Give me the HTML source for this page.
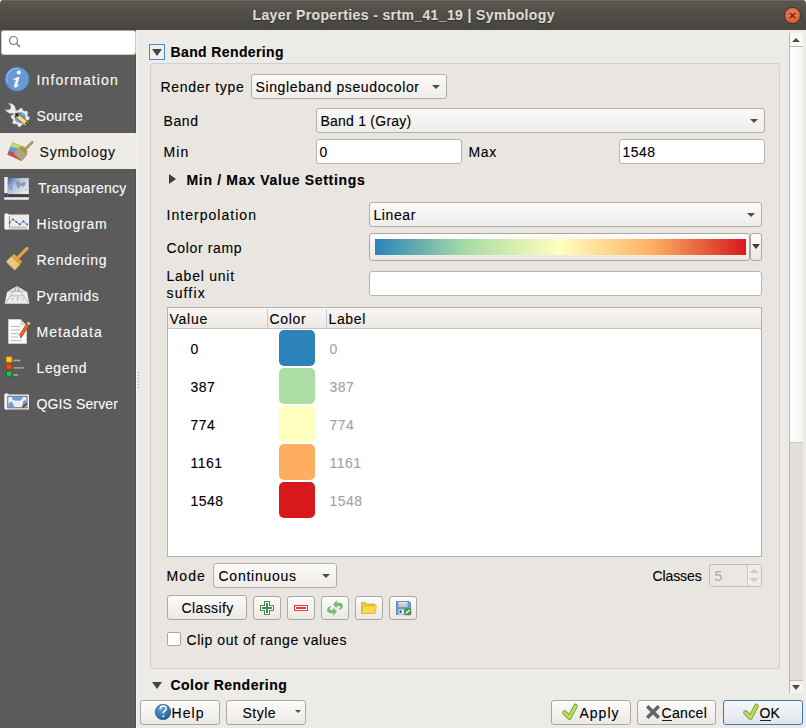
<!DOCTYPE html>
<html><head><meta charset="utf-8">
<style>
*{box-sizing:border-box;margin:0;padding:0}
html,body{width:806px;height:728px;overflow:hidden}
body{position:relative;background:#edebe7;font-family:"Liberation Sans",sans-serif;font-size:14px;color:#000}
.t{-webkit-text-stroke:0.12px currentColor}
.a{position:absolute}
.t{position:absolute;white-space:nowrap;line-height:14px;font-size:14px}
.b{font-weight:700}
#title{left:0;top:0;width:806px;height:30px;background:linear-gradient(#5a5650,#47453f);border-radius:4px 4px 0 0;box-shadow:inset 0 1px 0 #6c685f}
#side{left:0;top:30px;width:136px;height:698px;background:#5b5b5b;border-right:1px solid #525252}
.si{color:#fafafa}
.field{position:absolute;background:#fff;border:1px solid #b9b5ae;border-radius:3px}
.combo{position:absolute;background:linear-gradient(#fbfaf9,#efedea);border:1px solid #b3afa8;border-radius:3px}
.btn{position:absolute;background:linear-gradient(#fdfcfb,#ebe8e4);border:1px solid #aca8a1;border-radius:3px}
.arr{position:absolute;width:0;height:0;border-left:4px solid transparent;border-right:4px solid transparent;border-top:4px solid #4c4c4c}
</style></head><body>
<div id="title" class="a"></div>
<div class="t b" style="left:252.5px;top:8px;color:#dfdbd2;letter-spacing:0.37px;text-shadow:0 1px 1px rgba(0,0,0,.45)">Layer Properties - srtm_41_19 | Symbology</div>
<div class="a" style="left:784px;top:7px;width:17px;height:17px;border-radius:50%;background:radial-gradient(circle at 50% 30%,#f47a55,#e0501f);border:1px solid #3a3431"></div>
<svg class="a" style="left:784px;top:7px" width="17" height="17"><path d="M5.8 5.8L11.2 11.2M11.2 5.8L5.8 11.2" stroke="#2a2018" stroke-width="1.1"/></svg>

<div id="side" class="a"></div>

<div class="a" style="left:1px;top:30px;width:135px;height:25px;background:#fff;border-radius:3px;border:1px solid #cfcbc5;border-top-color:#a9a59f"></div>
<svg class="a" style="left:8px;top:35px" width="14" height="14"><circle cx="5.5" cy="5.5" r="4" fill="none" stroke="#7a7a7a" stroke-width="1.2"/><path d="M8.5 8.5L12 12" stroke="#7a7a7a" stroke-width="1.5"/></svg>
<div class="a" style="left:0;top:133px;width:137px;height:36px;background:#efece8"></div>
<div class="t si" style="left:36.5px;top:73px;letter-spacing:1.12px">Information</div>
<div class="t si" style="left:36.5px;top:109px;letter-spacing:0.37px">Source</div>
<div class="t" style="left:39.5px;top:145px;letter-spacing:0.79px;color:#101010">Symbology</div>
<div class="t si" style="left:38px;top:181px;letter-spacing:0.30px">Transparency</div>
<div class="t si" style="left:36.5px;top:217px;letter-spacing:0.80px">Histogram</div>
<div class="t si" style="left:36.5px;top:253px;letter-spacing:0.69px">Rendering</div>
<div class="t si" style="left:36.5px;top:289px;letter-spacing:0.57px">Pyramids</div>
<div class="t si" style="left:36.5px;top:325px;letter-spacing:0.97px">Metadata</div>
<div class="t si" style="left:36.5px;top:361px;letter-spacing:0.64px">Legend</div>
<div class="t si" style="left:36.5px;top:397px;letter-spacing:0.12px">QGIS Server</div>


<!-- sidebar icons -->
<svg class="a" style="left:0;top:62px" width="36" height="360" viewBox="0 62 36 360">
<defs>
<radialGradient id="gi" cx="40%" cy="30%" r="75%"><stop offset="0" stop-color="#7aa6de"/><stop offset="1" stop-color="#4a7cc0"/></radialGradient>
<linearGradient id="gt" x1="0" y1="0" x2="1" y2="0.7"><stop offset="0" stop-color="#3d67aa"/><stop offset="0.45" stop-color="#b4c4dc"/><stop offset="1" stop-color="#e8ebf0"/></linearGradient>
<pattern id="hatch" width="2" height="2" patternUnits="userSpaceOnUse"><rect width="2" height="2" fill="#c9c29a"/><rect width="1" height="1" fill="#8d8660"/></pattern>
<pattern id="hatch2" width="2" height="2" patternUnits="userSpaceOnUse"><rect width="2" height="2" fill="#f0c27a"/><rect width="1" height="1" fill="#c98a30"/></pattern>
</defs>
<!-- info -->
<circle cx="17.1" cy="79.1" r="12.2" fill="#6899d4" stroke="#4874b0" stroke-width="1"/>
<path d="M7.2 82 A10.2 10.2 0 0 1 20 69" stroke="#8fb5e4" stroke-width="1.2" fill="none"/>
<circle cx="18.8" cy="72.5" r="2.1" fill="#fff"/>
<path d="M13 79.6 Q15.5 77.2 19.6 76.8 L17.2 84.8 Q16.9 86 18.2 85.2 L19.9 84 Q18.6 87 15.6 87.6 Q13.5 87.9 14.2 85.5 L16.1 79.4 Q14.9 79.3 13.3 80.3Z" fill="#fff"/>
<!-- source -->
<path d="M20.20 108.30 L21.99 108.48 L23.03 110.66 L24.31 111.35 L26.71 110.99 L27.85 112.39 L27.04 114.67 L27.46 116.06 L29.40 117.50 L29.22 119.29 L27.04 120.33 L26.35 121.61 L26.71 124.01 L25.31 125.15 L23.03 124.34 L21.64 124.76 L20.20 126.70 L18.41 126.52 L17.37 124.34 L16.09 123.65 L13.69 124.01 L12.55 122.61 L13.36 120.33 L12.94 118.94 L11.00 117.50 L11.18 115.71 L13.36 114.67 L14.05 113.39 L13.69 110.99 L15.09 109.85 L17.37 110.66 L18.76 110.24Z" fill="#ebebeb" stroke="#d4d4d4" stroke-width="0.5"/>
<circle cx="20.2" cy="117.5" r="5.6" fill="#6d9fd8"/>
<path d="M5.2 109 A6 6 0 0 0 13 113.2 L16.5 116.5 L18.8 114.2 L15.5 110.6 A6 6 0 0 0 8 103.6 Q11.8 105.6 10.6 108.6 Q8.4 111 5.2 109Z" fill="#efefef" stroke="#8a8a8a" stroke-width="0.5"/>
<path d="M16 114.4 L27.6 124.8" stroke="#4a4530" stroke-width="5.2" stroke-linecap="butt"/>
<path d="M17.4 115.7 L27 124.3" stroke="#f1dc7a" stroke-width="4" stroke-linecap="butt"/>
<path d="M15.4 113.2 L18.6 116.6" stroke="#161616" stroke-width="1.4"/>
<circle cx="26.3" cy="123.4" r="1.1" fill="#1e1e1e" stroke="#888" stroke-width="0.3"/>
<!-- symbology -->
<path d="M12.3 142.2 L24.8 147 L20.7 160.8 L7.2 154.5Z" fill="#cb4a5f"/>
<path d="M12.3 142.2 L24.8 147 L23.6 151 L10.4 146.6Z" fill="#c3da6a"/>
<path d="M10.4 146.6 L23.6 151 L22.3 155.5 L8.6 150.6Z" fill="#5ea0da"/>
<path d="M23.8 150.8 L32.2 142.2" stroke="#aa9b68" stroke-width="2.8" stroke-linecap="round"/>
<path d="M13.9 153.7 L19 148 L26.8 154.5 L21.5 160.8Z" fill="#b4b092" stroke="#a3925d" stroke-width="1"/>
<path d="M15 153.5 L21 159.5 M16.5 152 L22.5 158 M18 150.5 L24 156.5 M19.5 149.5 L25.2 155 M15.5 155 L20 150 M17 156.5 L21.5 151.5 M18.5 158 L23 153 M20 159.5 L24.5 154.5" stroke="#948f6c" stroke-width="0.45"/>
<path d="M18.8 147.8 L22 146 L27.5 151 L26.8 154.5Z" fill="#a8955e"/>
<!-- transparency -->
<rect x="4.3" y="177" width="3.5" height="16" fill="#f0f0f0"/>
<rect x="7.8" y="178" width="21" height="16" fill="url(#gt)"/>
<path d="M15.5 181.5 L19 181 L21 183.5 L23.5 182 L26 182.5 L25 185 L23 187 L22 185.5 L20 186 L19 189 L17.5 188 L16.5 185Z M10 186 L12.5 186.5 L12 191 L10.5 190Z M25 189 L27 189.5 L26 191Z" fill="#8d9cb2"/>
<rect x="4" y="194.8" width="25" height="2" fill="#2c2c2c"/>
<path d="M4 195.8 H29" stroke="#555" stroke-width="2" stroke-dasharray="1 1.2"/>
<rect x="6.6" y="194.2" width="1.6" height="3.6" fill="#2f5ea8"/>
<rect x="4.2" y="197.2" width="24.6" height="2.6" fill="#e6e6e6"/>
<!-- histogram -->
<rect x="4.5" y="213.5" width="4" height="16" rx="1.5" fill="#f4f4f4" stroke="#cfcfcf" stroke-width="0.5"/>
<rect x="8" y="214.5" width="19" height="15" fill="#eaeaea"/>
<rect x="27" y="214.5" width="2" height="15" fill="#f0f0f0"/>
<path d="M9.5 216 V227.5" stroke="#9c9c9c" stroke-width="1"/>
<rect x="10" y="226.5" width="16.5" height="2" fill="#c4c4c4"/>
<path d="M9.6 222.6 L12.8 219.3 L16.3 221.8 L19.7 224.4 L23.4 221.4 L27.2 224.4" stroke="#4a6fb0" stroke-width="0.8" fill="none"/>
<g fill="#33599c"><circle cx="9.6" cy="222.6" r="0.9"/><circle cx="12.8" cy="219.3" r="0.9"/><circle cx="16.3" cy="221.8" r="0.9"/><circle cx="19.7" cy="224.4" r="0.9"/><circle cx="23.4" cy="221.4" r="0.9"/><circle cx="27.2" cy="224.4" r="0.9"/></g>
<!-- rendering -->
<path d="M17 258.5 L27 248.5" stroke="#dfa245" stroke-width="3.2" stroke-linecap="round"/>
<path d="M6.2 261.7 L11.6 256.3 L20 264.4 L14.7 270.2Z" fill="#efcf92" stroke="#d89e42" stroke-width="0.8"/>
<path d="M8 261.5 L15.5 269 M9.8 259.7 L17.3 267.2 M11.5 258 L19 265.5 M8.5 263.8 L13.5 258.5 M10.3 265.6 L15.3 260.3 M12 267.4 L17 262.1 M13.8 269 L18.8 263.8" stroke="#dcae62" stroke-width="0.5"/>
<path d="M12 256 L14 254 L22 261.8 L20 264Z" fill="#e2a542" stroke="#d08e2a" stroke-width="0.8" stroke-linejoin="round"/>
<!-- pyramids -->
<path d="M4.6 303.8 L7.2 291.5 L27 291.5 L29.4 303.8Z" fill="#ececec"/>
<path d="M7.5 291.5 L16.9 285.8 L26.5 291.5Z" fill="#e2e2e2"/>
<path d="M6.5 291.2 L16.9 285.6 L27.5 291.2" stroke="#3a3a3a" stroke-width="0.8" fill="none" stroke-dasharray="1.5 1"/>
<path d="M16.9 286.5 L5.5 303 M16.9 286.5 L28.5 303" stroke="#a8a8a8" stroke-width="0.8" fill="none"/>
<path d="M10.5 295.8 H23" stroke="#c2c2c2" stroke-width="1"/>
<path d="M14 288.5 l2 1 l-1 3 z M18 288 l2 2 l-1 2 l-2 -1z M11.5 298 l2 0 l-1 3z M17 297 l1.5 0 l-0.5 4 l-1 0z M22 298 l2 1 l-1 2z" fill="#b8b8b8"/>
<!-- metadata -->
<path d="M8.5 319.5 L20.5 319.5 L26.5 325.5 L26.5 343.5 L8.5 343.5Z" fill="#fafafa" stroke="#e0e0e0" stroke-width="0.6"/>
<path d="M20.5 319.5 L20.5 325.5 L26.5 325.5Z" fill="#d8d8d8"/>
<path d="M11 326.5 H20 M11 330 H20 M11 333.5 H19 M11 337 H18 M11 340.5 H22" stroke="#b4b4b4" stroke-width="0.9"/>
<path d="M20.5 336 L28.5 323.5" stroke="#a84410" stroke-width="3.6"/><path d="M20.5 336 L28.5 323.5" stroke="#e8691e" stroke-width="2.4"/><path d="M27.5 322.5 L30 324" stroke="#e8e8e8" stroke-width="1.5"/>
<path d="M19.8 338.5 L20.3 335.8 L22 337z" fill="#555"/>
<!-- legend -->
<rect x="6.6" y="357" width="5.2" height="5" fill="#ffd21a" stroke="#e8a100" stroke-width="0.8"/>
<rect x="6.6" y="364.2" width="5.2" height="5" fill="#ff4a00" stroke="#bb3300" stroke-width="0.8"/>
<rect x="6.6" y="371.2" width="5.2" height="5" fill="#1fc15a" stroke="#0c6a30" stroke-width="0.8"/>
<path d="M13.5 360.5 H20.5 M13.5 367.8 H24 M13.5 375 H18" stroke="#b0b0b0" stroke-width="1.3"/>
<!-- qgis server -->
<rect x="4.5" y="393.5" width="4" height="16" rx="1.5" fill="#f4f4f4" stroke="#d8d8d8" stroke-width="0.5"/>
<rect x="8" y="394.5" width="21" height="15" fill="#eeeeee"/>
<rect x="7.8" y="396.3" width="19.2" height="11.5" fill="#eeeeee" stroke="#4c4c4c" stroke-width="0.8"/>
<path d="M12.2 396.7 H23 Q22 400.5 18.5 400.8 Q15 401 12.2 399.5Z M8.2 407.5 L8.2 404.5 Q10 400.8 12 402 Q13.5 403.5 14.5 407.5Z M23 401.5 Q25 399.5 26.6 401 L26.6 404 L23 403.8Z" fill="#6a9fdb"/>
<path d="M21.5 407.6 L26.6 402.6 L26.6 405 L24 407.6Z" fill="#3e3e3e"/>
<path d="M21.5 407.6 L23 403.5 L26.6 402.6" fill="#777"/>
</svg>

<!-- main -->
<div class="a" style="left:136px;top:30px;width:1px;height:698px;background:#f6f3ee"></div>
<div class="a" style="left:138px;top:372px;width:1px;height:16px;background:repeating-linear-gradient(#9a9a9a 0 1px,transparent 1px 3px)"></div>
<div class="a" style="left:149px;top:44px;width:16px;height:16px;border:1px solid #3b8fd0;background:#f2efeb"></div>
<div class="arr" style="left:152px;top:49px;border-left-width:5px;border-right-width:5px;border-top-width:7px;border-top-color:#464646"></div>
<div class="t b" style="left:170.5px;top:45px;letter-spacing:0.38px">Band Rendering</div>
<div class="a" style="left:150px;top:63px;width:630px;height:606px;border:1px solid #d3cfc9;border-radius:3px;background:#e9e6e2"></div>

<div class="t" style="left:160.5px;top:80px;letter-spacing:0.69px">Render type</div>
<div class="combo" style="left:251px;top:74px;width:196px;height:25px"></div>
<div class="t" style="left:255.5px;top:80px;letter-spacing:0.63px">Singleband pseudocolor</div>
<div class="arr" style="left:432px;top:85px"></div>

<div class="t" style="left:163.5px;top:114px;letter-spacing:0.62px">Band</div>
<div class="combo" style="left:316px;top:108px;width:449px;height:25px"></div>
<div class="t" style="left:320.5px;top:114px;letter-spacing:0.23px">Band 1 (Gray)</div>
<div class="arr" style="left:750px;top:119px"></div>

<div class="t" style="left:163.5px;top:145px;letter-spacing:1.09px">Min</div>
<div class="field" style="left:316px;top:139px;width:146px;height:25px"></div>
<div class="t" style="letter-spacing:0.12px;left:319.5px;top:145px">0</div>
<div class="t" style="left:468.5px;top:145px;letter-spacing:0.59px">Max</div>
<div class="field" style="left:619px;top:139px;width:146px;height:25px"></div>
<div class="t" style="left:622.5px;top:145px;letter-spacing:0.50px">1548</div>

<div class="arr" style="left:169px;top:174px;border-top:5px solid transparent;border-bottom:5px solid transparent;border-left:7px solid #3c3c3c;border-right:0"></div>
<div class="t b" style="left:186.5px;top:173px;letter-spacing:0.68px">Min / Max Value Settings</div>

<div class="t" style="left:166.5px;top:208px;letter-spacing:1.03px">Interpolation</div>
<div class="combo" style="left:369px;top:202px;width:393px;height:25px"></div>
<div class="t" style="left:373.5px;top:208px;letter-spacing:0.58px">Linear</div>
<div class="arr" style="left:747px;top:213px"></div>

<div class="t" style="left:166.5px;top:241px;letter-spacing:0.65px">Color ramp</div>
<div class="btn" style="left:369px;top:233px;width:381px;height:28px"></div>
<div class="a" style="left:375px;top:239px;width:371px;height:16px;background:linear-gradient(90deg,#2b83ba 0%,#abdda4 25%,#ffffbf 50%,#fdae61 75%,#d7191c 100%)"></div>
<div class="btn" style="left:750px;top:233px;width:12px;height:28px"></div>
<div class="arr" style="left:752px;top:244px;border-left-width:4px;border-right-width:4px;border-top-width:5px;border-top-color:#3c3c3c"></div>

<div class="t" style="left:166.5px;top:269px;letter-spacing:0.76px">Label unit</div>
<div class="t" style="left:166.5px;top:286px;letter-spacing:1.15px">suffix</div>
<div class="field" style="left:369px;top:271px;width:393px;height:25px"></div>

<!-- table -->
<div class="a" style="left:167px;top:307px;width:595px;height:250px;background:#fff;border:1px solid #b5b1aa"></div>
<div class="a" style="left:168px;top:308px;width:593px;height:21px;background:linear-gradient(#f9f7f5,#ece9e5);border-bottom:1px solid #c8c4be"></div>
<div class="a" style="left:267px;top:309px;width:1px;height:19px;background:#cdc9c3"></div>
<div class="a" style="left:326px;top:309px;width:1px;height:19px;background:#cdc9c3"></div>
<div class="t" style="left:169.5px;top:312px;letter-spacing:0.77px">Value</div>
<div class="t" style="left:269.5px;top:312px;letter-spacing:0.65px">Color</div>
<div class="t" style="left:328.5px;top:312px;letter-spacing:0.63px">Label</div>

<div class="a" style="left:279px;top:330px;width:36px;height:36px;border-radius:5px;background:#2b83ba"></div>
<div class="a" style="left:279px;top:368px;width:36px;height:36px;border-radius:5px;background:#abdda4"></div>
<div class="a" style="left:279px;top:406px;width:36px;height:36px;border-radius:5px;background:#ffffbf"></div>
<div class="a" style="left:279px;top:444px;width:36px;height:36px;border-radius:5px;background:#fdae61"></div>
<div class="a" style="left:279px;top:482px;width:36px;height:36px;border-radius:5px;background:#d7191c"></div>
<div class="t" style="letter-spacing:0.12px;left:190.5px;top:342px">0</div>
<div class="t" style="left:190.5px;top:380px;letter-spacing:0.50px">387</div>
<div class="t" style="left:190.5px;top:418px;letter-spacing:0.50px">774</div>
<div class="t" style="left:190.5px;top:456px;letter-spacing:0.50px">1161</div>
<div class="t" style="left:190.5px;top:494px;letter-spacing:0.50px">1548</div>
<div class="t" style="letter-spacing:0.12px;left:329.5px;top:342px;color:#a3a3a3">0</div>
<div class="t" style="left:329.5px;top:380px;color:#a3a3a3;letter-spacing:0.50px">387</div>
<div class="t" style="left:329.5px;top:418px;color:#a3a3a3;letter-spacing:0.50px">774</div>
<div class="t" style="left:329.5px;top:456px;color:#a3a3a3;letter-spacing:0.50px">1161</div>
<div class="t" style="left:329.5px;top:494px;color:#a3a3a3;letter-spacing:0.50px">1548</div>

<div class="t" style="left:166.5px;top:569px;letter-spacing:1.11px">Mode</div>
<div class="combo" style="left:213px;top:563px;width:124px;height:25px"></div>
<div class="t" style="left:218.5px;top:569px;letter-spacing:0.74px">Continuous</div>
<div class="arr" style="left:322px;top:574px"></div>
<div class="t" style="left:652.5px;top:569px;letter-spacing:-0.11px">Classes</div>
<div class="a" style="left:709px;top:564px;width:53px;height:23px;border:1px solid #c4c0b9;border-radius:3px;background:#ebe8e4"></div>
<div class="a" style="left:747px;top:565px;width:1px;height:21px;background:#cfcbc5"></div>
<div class="t" style="letter-spacing:0.12px;left:714.5px;top:569px;color:#b0aca6">5</div>
<div class="a" style="left:748px;top:565px;width:13px;height:21px;background:#efedea;border-radius:0 2px 2px 0"></div>
<div class="arr" style="left:749px;top:569px;border-top:0;border-bottom:4px solid #cfcbc5;border-left-width:5px;border-right-width:5px"></div>
<div class="arr" style="left:749px;top:578px;border-top:4px solid #cfcbc5;border-left-width:5px;border-right-width:5px"></div>

<div class="btn" style="left:167px;top:595px;width:80px;height:25px"></div>
<div class="t" style="left:181.5px;top:601px;letter-spacing:0.40px">Classify</div>
<div class="btn" style="left:253px;top:596px;width:28px;height:24px"></div>
<div class="btn" style="left:287px;top:596px;width:28px;height:24px"></div>
<div class="btn" style="left:321px;top:596px;width:28px;height:24px"></div>
<div class="btn" style="left:355px;top:596px;width:28px;height:24px"></div>
<div class="btn" style="left:389px;top:596px;width:28px;height:24px"></div>

<div class="a" style="left:167px;top:632px;width:14px;height:14px;background:#fff;border:1px solid #aaa6a0;border-radius:2px"></div>
<div class="t" style="left:186.5px;top:633px;letter-spacing:0.56px">Clip out of range values</div>

<div class="arr" style="left:152px;top:682px;border-left-width:5px;border-right-width:5px;border-top-width:7px;border-top-color:#464646"></div>
<div class="t b" style="left:170.5px;top:678px;letter-spacing:0.47px">Color Rendering</div>

<!-- scrollbar -->
<div class="a" style="left:789px;top:33px;width:14px;height:660px;background:#e3e0dc;border-left:1px solid #b9b6b1"></div>
<div class="a" style="left:790px;top:33px;width:13px;height:14px;background:#f9f8f6;border-bottom:1px solid #bdbab5"></div>
<div class="arr" style="left:792px;top:37.5px;border-top:0;border-bottom:4.5px solid #4a4a4a"></div>
<div class="a" style="left:790px;top:47px;width:13px;height:396px;background:linear-gradient(90deg,#ffffff,#f6f4f1);border-bottom:1px solid #c8c5c0"></div>
<div class="a" style="left:790px;top:680px;width:13px;height:13px;background:#f5f3f0;border-top:1px solid #bdbab5"></div>
<div class="arr" style="left:792px;top:685px;border-top-width:5px;border-top-color:#4a4a4a"></div>

<!-- bottom buttons -->
<div class="btn" style="left:140px;top:700px;width:80px;height:25px"></div>
<div class="t" style="left:171.5px;top:706px;letter-spacing:1.09px">Help</div>
<div class="btn" style="left:226px;top:700px;width:80px;height:25px"></div>
<div class="t" style="left:242.5px;top:706px;letter-spacing:0.49px">Style</div>
<div class="arr" style="left:295px;top:710px;border-left-width:3px;border-right-width:3px;border-top-width:3px"></div>
<div class="btn" style="left:551px;top:700px;width:80px;height:25px"></div>
<div class="t" style="left:579.5px;top:706px;letter-spacing:0.99px">Apply</div>
<div class="btn" style="left:637px;top:700px;width:79px;height:25px"></div>
<div class="t" style="left:661.5px;top:706px;letter-spacing:0.36px">Cancel</div>
<div class="a" style="left:662px;top:720px;width:10px;height:1px;background:#202020"></div>
<div class="a" style="left:723px;top:700px;width:80px;height:25px;background:linear-gradient(#f6f8fa,#e1e5ea);border:1px solid #3d78ae;border-radius:3px"></div>
<div class="t" style="letter-spacing:0.12px;left:759.5px;top:706px">OK</div>
<div class="a" style="left:760px;top:720px;width:11px;height:1px;background:#202020"></div>

<!-- button icons -->
<svg class="a" style="left:0;top:0" width="806" height="728" viewBox="0 0 806 728" pointer-events="none">
<defs>
<radialGradient id="gh" cx="40%" cy="30%" r="70%"><stop offset="0" stop-color="#6fa2d8"/><stop offset="1" stop-color="#1f5c9c"/></radialGradient>
<linearGradient id="gc" x1="0" y1="0" x2="1" y2="1"><stop offset="0" stop-color="#d6ec8a"/><stop offset="1" stop-color="#7fae2e"/></linearGradient>
</defs>
<!-- help -->
<circle cx="163" cy="712" r="7.8" fill="url(#gh)" stroke="#245a92" stroke-width="0.6"/>
<path d="M160.2 709.3 Q160.4 706 163.2 706 Q166.3 706.1 166.2 708.8 Q166.1 710.5 164.2 711.4 Q163.3 711.9 163.3 713.6" stroke="#fff" stroke-width="1.5" fill="none"/>
<circle cx="163.3" cy="716.3" r="1" fill="#fff"/>
<!-- apply check -->
<path d="M564.5 712.5 L569.5 717.5 L575.5 706" stroke="#7aa830" stroke-width="4.6" fill="none" stroke-linejoin="round" stroke-linecap="round"/>
<path d="M564.5 712.5 L569.5 717.5 L575.5 706" stroke="#c2dc62" stroke-width="2.6" fill="none" stroke-linejoin="round" stroke-linecap="round"/>
<!-- cancel x -->
<path d="M648.5 707.5 L657.5 716.5 M657.5 707.5 L648.5 716.5" stroke="#666" stroke-width="3.6" stroke-linecap="square"/>
<!-- ok check -->
<path d="M745.5 712.5 L750.5 717.5 L756.5 706" stroke="#7aa830" stroke-width="4.6" fill="none" stroke-linejoin="round" stroke-linecap="round"/>
<path d="M745.5 712.5 L750.5 717.5 L756.5 706" stroke="#c2dc62" stroke-width="2.6" fill="none" stroke-linejoin="round" stroke-linecap="round"/>
<!-- plus -->
<path d="M264 601 H270 V605 H274 V611 H270 V615 H264 V611 H260 V605 H264Z" fill="#4a8a4e"/>
<path d="M265 602 H269 V606 H273 V610 H269 V614 H265 V610 H261 V606 H265Z" fill="#fff"/>
<path d="M267 603 V613 M262 608 H272" stroke="#4a8a4e" stroke-width="2"/>
<!-- minus -->
<rect x="294" y="605" width="14" height="6" fill="#e23a3a"/>
<rect x="295" y="606" width="12" height="4" fill="#fff"/>
<rect x="296" y="607" width="10" height="2" fill="#e23a3a"/>
<!-- refresh -->
<path d="M333 604.6 L336.8 600 L336.8 602.6 Q343 602.3 343 606 Q343 609.5 338.2 609.8 Q340.5 608.5 340 606.8 Q339.5 605.8 336.8 606.2 L336.8 608.8Z" fill="#7dbb85"/>
<path d="M337 611.4 L333.2 616 L333.2 613.4 Q327 613.7 327 610 Q327 606.5 331.8 606.2 Q329.5 607.5 330 609.2 Q330.5 610.2 333.2 609.8 L333.2 607.2Z" fill="#7dbb85"/>
<!-- folder -->
<path d="M361.5 602.5 H365.5 L367 604 H375 V613.5 H361.5Z" fill="#e7c63a" stroke="#c9a31e" stroke-width="0.6"/>
<path d="M361.5 613.5 L363.5 606 H376.5 L375 613.5Z" fill="#fbd84c" stroke="#d9b42a" stroke-width="0.6"/>
<!-- floppy -->
<path d="M396.5 601.5 H409 L410.5 603 V614.5 H396.5Z" fill="#6b9bd2" stroke="#4f7db5" stroke-width="0.8"/>
<rect x="398.5" y="602" width="9" height="5" fill="#c9c9c9"/>
<rect x="398.5" y="602" width="9" height="1.5" fill="#e4e4e4"/>
<rect x="398.5" y="609.5" width="5.5" height="5" fill="#e8e8e8"/>
<rect x="399.5" y="610.5" width="2" height="2.5" fill="#2f4f7a"/>
<rect x="404.5" y="608.5" width="6.5" height="6.5" rx="1.5" fill="#4e9a52" stroke="#3d7f40" stroke-width="0.5"/>
<path d="M406 613.5 L409.5 610" stroke="#fff" stroke-width="1.1"/>
</svg>
</body></html>
